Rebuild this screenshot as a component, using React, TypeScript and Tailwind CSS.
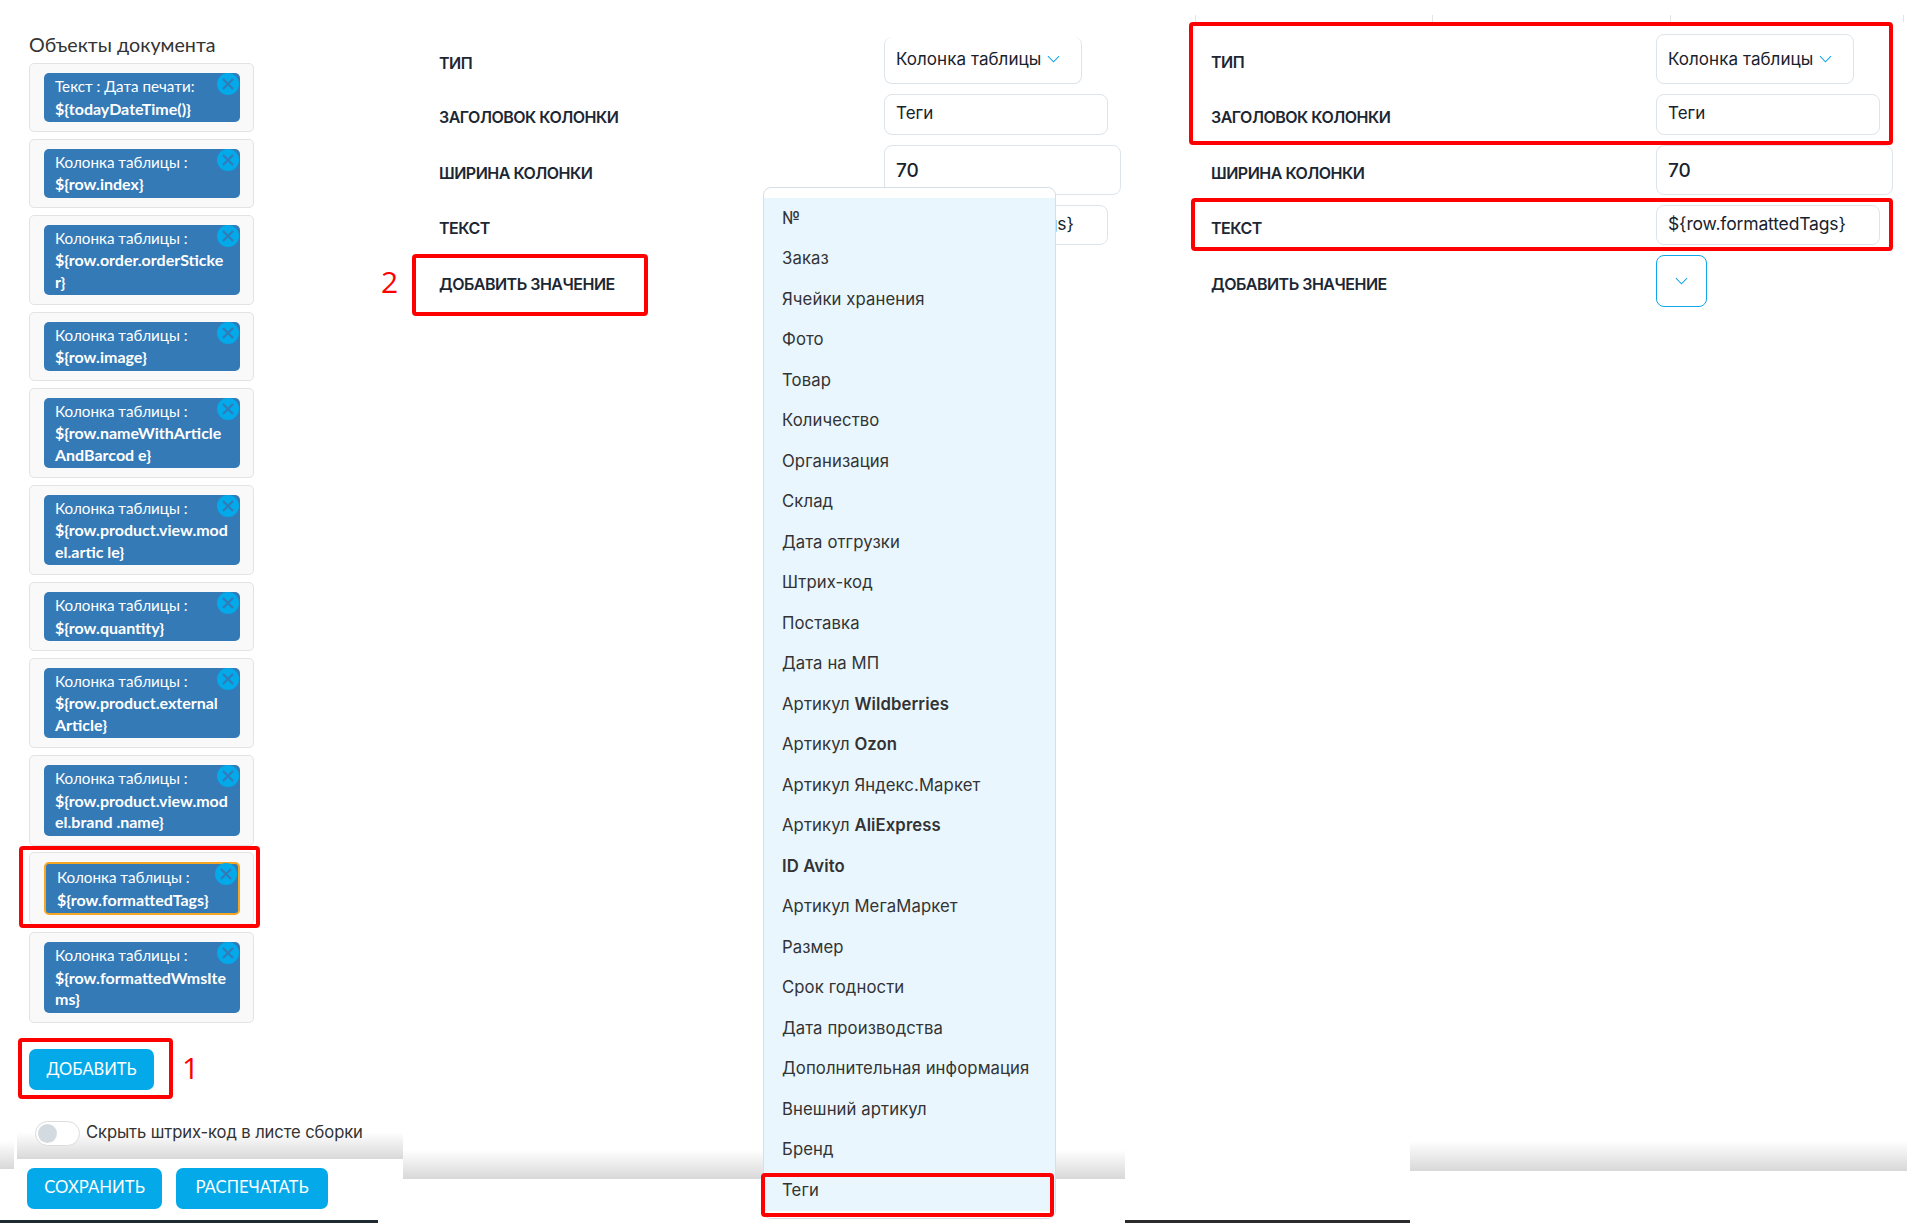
import React from "react";

const chips: { lines: string[]; selected?: boolean }[] = [
  { lines: ["Текст : Дата печати:", "${todayDateTime()}"] },
  { lines: ["Колонка таблицы :", "${row.index}"] },
  { lines: ["Колонка таблицы :", "${row.order.orderSticke", "r}"] },
  { lines: ["Колонка таблицы :", "${row.image}"] },
  { lines: ["Колонка таблицы :", "${row.nameWithArticle", "AndBarcod e}"] },
  { lines: ["Колонка таблицы :", "${row.product.view.mod", "el.artic le}"] },
  { lines: ["Колонка таблицы :", "${row.quantity}"] },
  { lines: ["Колонка таблицы :", "${row.product.external", "Article}"] },
  { lines: ["Колонка таблицы :", "${row.product.view.mod", "el.brand .name}"] },
  { lines: ["Колонка таблицы :", "${row.formattedTags}"], selected: true },
  { lines: ["Колонка таблицы :", "${row.formattedWmsIte", "ms}"] },
];

const menu: React.ReactNode[] = [
  "№", "Заказ", "Ячейки хранения", "Фото", "Товар", "Количество", "Организация", "Склад",
  "Дата отгрузки", "Штрих-код", "Поставка", "Дата на МП",
  <span>Артикул <b className="font-semibold">Wildberries</b></span>,
  <span>Артикул <b className="font-semibold">Ozon</b></span>,
  "Артикул Яндекс.Маркет",
  <span>Артикул <b className="font-semibold">AliExpress</b></span>,
  <b className="font-semibold">ID Avito</b>,
  "Артикул МегаМаркет", "Размер", "Срок годности", "Дата производства",
  "Дополнительная информация", "Внешний артикул", "Бренд", "Теги",
];

function Chevron() {
  return (
    <svg width="13" height="8" viewBox="0 0 14 8" fill="none" stroke="#0ea5e9" strokeWidth="1.1">
      <path d="M1 1l6 6 6-6" />
    </svg>
  );
}

function Chip({ lines, selected }: { lines: string[]; selected?: boolean }) {
  return (
    <div className="rounded-[5px] border border-[#e3e3e3] bg-[#f9f9f9] py-[9px] pl-[14px] pr-[13px]">
      <div
        className={
          selected
            ? "relative rounded-[5px] border-2 border-[#f5a623] bg-[#337ab7] py-[3px] pl-[11px] text-white"
            : "relative rounded-[5px] bg-[#337ab7] py-[3px] pl-[11px] text-white"
        }
      >
        {lines.map((l, i) => (
          <div
            key={i}
            className={
              i === 0
                ? "whitespace-nowrap text-[15.2px] leading-[21.5px]"
                : "whitespace-nowrap text-[16px] font-bold leading-[21.5px]"
            }
          >
            {l}
          </div>
        ))}
        <span
          className={
            selected
              ? "absolute right-[1px] top-[-1px] flex h-[22px] w-[22px] items-center justify-center rounded-full bg-[#03a9e8]"
              : "absolute right-[1px] top-0 flex h-[22px] w-[22px] items-center justify-center rounded-full bg-[#03a9e8]"
          }
        >
          <svg width="12" height="12" viewBox="0 0 12 12" fill="none" stroke="#337ab7" strokeWidth="2">
            <path d="M1 1l10 10M11 1L1 11" />
          </svg>
        </span>
      </div>
    </div>
  );
}

function Field({ children, className }: { children: React.ReactNode; className: string }) {
  return (
    <div className={"flex items-start rounded-[8px] border border-[#dde4ea] bg-white pl-[11px] text-[#18222d] " + className}>
      {children}
    </div>
  );
}

function Row({ label, children }: { label: string; children: React.ReactNode }) {
  return (
    <div className="flex items-center">
      <div className="w-[445px] pt-[5px] text-[16px] font-semibold tracking-[-0.5px] text-[#1c2733]">{label}</div>
      {children}
    </div>
  );
}

function Form({ wide }: { wide: boolean }) {
  return (
    <div className={wide ? "flex flex-col gap-[10px] pl-[86px] pt-[34px]" : "flex flex-col gap-[10px] pl-[36px] pt-[37px]"}>
      <Row label="ТИП">
        <Field className={wide ? "h-[50px] w-[198px] pt-[12px]" : "h-[47px] w-[198px] border-t-0 pt-[10px]"}>
          <span className="text-[17px] tracking-[0.05px]">Колонка таблицы</span>
          <span className="ml-[6px] pt-[8px]"><Chevron /></span>
        </Field>
      </Row>
      <Row label="ЗАГОЛОВОК КОЛОНКИ">
        <Field className="h-[41px] w-[224px] pt-[6px] text-[17px]">Теги</Field>
      </Row>
      <Row label="ШИРИНА КОЛОНКИ">
        <Field className="h-[50px] w-[237px] pt-[11px] text-[19px] font-medium">70</Field>
      </Row>
      <Row label="ТЕКСТ">
        <Field className="h-[40px] w-[224px] pt-[5px] text-[17.5px] tracking-[-0.15px]">{"${row.formattedTags}"}</Field>
      </Row>
      <Row label="ДОБАВИТЬ ЗНАЧЕНИЕ">
        <button className="flex h-[52px] w-[51px] items-center justify-center rounded-[8px] border border-[#0ea5e9] bg-white">
          <Chevron />
        </button>
      </Row>
    </div>
  );
}

export default function App() {
  return (
    <div className="flex h-[1223px] w-[1907px] overflow-hidden bg-white [font-family:Inter,'Noto_Sans',sans-serif]">
      {/* Column 1 */}
      <section className="relative flex w-[403px] flex-col">
        <div className="flex min-h-0 flex-1">
          <div className="w-[14px] pt-[1141px]">
            <div className="h-[28px] bg-gradient-to-b from-white to-[#d8d8d8]" />
          </div>
          <div className="flex flex-1 flex-col">
            <div className="ml-[15px] w-[225px] [font-family:Lato,'Noto_Sans',sans-serif]">
              <h2 className="mb-[5px] mt-[32px] h-[26px] text-[19.7px] font-normal leading-[26px] text-[#333]">Объекты документа</h2>
              <div className="flex flex-col gap-[6.75px]">
                {chips.map((c, i) => (
                  <Chip key={i} lines={c.lines} selected={c.selected} />
                ))}
              </div>
              <button className="mt-[26px] h-[41px] w-[125px] rounded-[7px] bg-[#03a9e8] text-[16.5px] text-white">ДОБАВИТЬ</button>
            </div>
            <div className="relative z-10 ml-[21px] mt-[31px] flex h-[25px] items-center gap-[6px]">
              <span className="flex h-[25px] w-[45px] items-center rounded-full border border-[#dcdcdc] bg-white pl-[2px]">
                <span className="h-[19px] w-[19px] rounded-full bg-[#d3dbe0]" />
              </span>
              <span className="whitespace-nowrap pb-[1px] text-[16.6px] tracking-[-0.1px] text-[#333]">Скрыть штрих-код в листе сборки</span>
            </div>
            <div className="-mt-[14px] ml-[3px] h-[27px] bg-gradient-to-b from-white to-[#d8d8d8]" />
            <div className="flex flex-1 gap-[14px] pl-[13px] pt-[9px] [font-family:Lato,'Noto_Sans',sans-serif] text-[16.7px] text-white">
              <button className="h-[41px] w-[135px] rounded-[7px] bg-[#03a9e8]">СОХРАНИТЬ</button>
              <button className="h-[41px] w-[152px] rounded-[7px] bg-[#03a9e8]">РАСПЕЧАТАТЬ</button>
            </div>
          </div>
        </div>
        <div className="h-[3px] w-[378px] bg-[#1e2a30]" />
        <div className="absolute left-[19px] top-[846px] h-[82px] w-[241px] rounded-[4px] border-4 border-[#ff0000]" />
        <div className="absolute left-[18px] top-[1038px] h-[61px] w-[155px] rounded-[4px] border-4 border-[#ff0000]" />
        <span className="absolute left-[182px] top-[1048px] text-[30px] leading-[40px] text-[#ff0000] [font-family:'Open_Sans',sans-serif]">1</span>
        <span className="absolute left-[381px] top-[262px] text-[30px] leading-[40px] text-[#ff0000] [font-family:'Open_Sans',sans-serif]">2</span>
      </section>

      {/* Column 2 */}
      <section className="relative flex w-[722px] flex-col">
        <Form wide={false} />
        <div className="flex-1" />
        <div className="h-[29px] bg-gradient-to-b from-white to-[#d8d8d8]" />
        <div className="h-[44px]" />
        <div className="absolute left-[360px] top-[187px] w-[293px] rounded-[8px] border border-[#d6dfe6] bg-white pb-[7px] pt-[10px]">
          <ul className="bg-[#e9f6fe] text-[16.7px] tracking-[0.1px] text-[#333]">
            {menu.map((m, i) => (
              <li key={i} className="flex h-[40.5px] items-center whitespace-nowrap pl-[18px]">{m}</li>
            ))}
          </ul>
        </div>
        <div className="absolute left-[9px] top-[254px] h-[62px] w-[236px] rounded-[4px] border-4 border-[#ff0000]" />
        <div className="absolute left-[358px] top-[1173px] h-[44px] w-[293px] rounded-[4px] border-4 border-[#ff0000]" />
      </section>

      {/* Column 3 */}
      <section className="relative flex w-[782px] flex-col">
        <Form wide />
        <div className="flex min-h-0 flex-1">
          <div className="flex w-[285px] flex-col justify-end">
            <div className="h-[3px] bg-[#2b2a2c]" />
          </div>
          <div className="flex flex-1 flex-col justify-end pb-[52px]">
            <div className="h-[30px] bg-gradient-to-b from-white to-[#d8d8d8]" />
          </div>
        </div>
        <span className="absolute left-[70px] top-[15px] h-[7px] w-px bg-[#e4e4e4]" />
        <span className="absolute left-[307px] top-[15px] h-[7px] w-px bg-[#e4e4e4]" />
        <span className="absolute left-[545px] top-[15px] h-[7px] w-px bg-[#e4e4e4]" />
        <span className="absolute left-[778px] top-[15px] h-[7px] w-px bg-[#e4e4e4]" />
        <div className="absolute left-[64px] top-[22px] h-[123px] w-[704px] rounded-[4px] border-4 border-[#ff0000]" />
        <div className="absolute left-[66px] top-[198px] h-[53px] w-[702px] rounded-[4px] border-4 border-[#ff0000]" />
      </section>
    </div>
  );
}
